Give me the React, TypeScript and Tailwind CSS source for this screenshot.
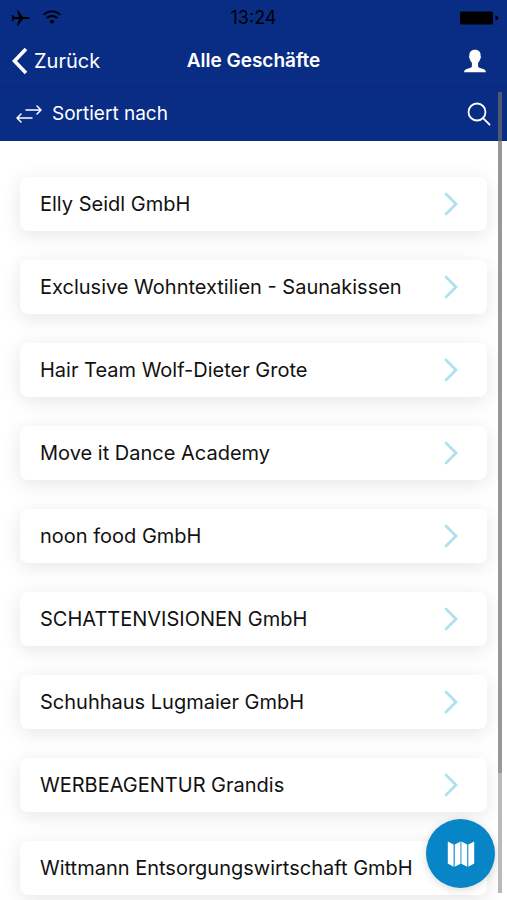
const shops = [
  'Elly Seidl GmbH',
  'Exclusive Wohntextilien - Saunakissen',
  'Hair Team Wolf-Dieter Grote',
  'Move it Dance Academy',
  'noon food GmbH',
  'SCHATTENVISIONEN GmbH',
  'Schuhhaus Lugmaier GmbH',
  'WERBEAGENTUR Grandis',
  'Wittmann Entsorgungswirtschaft GmbH',
];

function StatusBar() {
  return (
    <div className="grid h-9 grid-cols-3 items-center px-2 text-black">
      <div className="flex items-center gap-3 pl-0.5">
        <svg className="h-4 w-5" viewBox="0 0 20 16" fill="currentColor" aria-hidden="true">
          <path d="M19.5 8c0 .7-1 1.100-2.200 1.100h-4.300L8.200 15.500H6.900L9 9.100H4.600L2.900 11H1.600L2.400 8l-.8-3h1.300l1.700 1.900H9L6.900.5h1.300l4.800 6.400h4.300c1.200 0 2.200.4 2.200 1.100z" />
        </svg>
        <svg className="h-4 w-5" viewBox="0 0 20 16" fill="none" stroke="currentColor" strokeWidth="1.8" aria-hidden="true">
          <path d="M1.8 4.800a11.500 11.500 0 0 1 16.400 0M4.800 8.200a7.300 7.300 0 0 1 10.400 0" />
          <path d="M10 14 7.300 11.300a3.800 3.800 0 0 1 5.400 0z" fill="currentColor" stroke="none" />
        </svg>
      </div>
      <span className="text-center text-lg">13:24</span>
      <svg className="h-4 w-10 justify-self-end" viewBox="0 0 40 16" fill="currentColor" aria-hidden="true">
        <rect x="1" y="1.500" width="33" height="13" rx="1.500" />
        <path d="M36.500 5.500c2 .6 2.800 1.500 2.800 2.500s-.8 1.900-2.800 2.500z" />
      </svg>
    </div>
  );
}

function Header() {
  return (
    <header className="bg-[#092d84] text-white">
      <StatusBar />
      <div className="grid h-[51px] grid-cols-[1fr_auto_1fr] items-center border-b border-[#08276f] px-3">
        <button className="flex items-center gap-1.5 text-xl">
          <svg className="h-7 w-4" viewBox="0 0 16 28" fill="none" stroke="currentColor" strokeWidth="3.600" aria-hidden="true">
            <path d="M14 2 2.500 14 14 26" />
          </svg>
          Zurück
        </button>
        <h1 className="text-[19px] font-semibold">Alle Geschäfte</h1>
        <button className="mr-2 justify-self-end" aria-label="Profil">
          <svg className="h-6 w-6" viewBox="0 0 24 24" fill="currentColor" aria-hidden="true">
            <path d="M12 .8c3.900 0 5.900 2.400 5.600 6.200 .5.300.5 1.900-.3 2.700-.4 1.800-1.200 3-2.200 4v3.300c0 1.500 1.200 1.900 3.400 2.500 2.800.7 4.300 1.500 4.500 3.700H1c.2-2.200 1.700-3 4.500-3.700 2.200-.6 3.400-1 3.400-2.500v-3.300c-1-1-1.800-2.200-2.200-4-.8-.8-.8-2.400-.3-2.700C6.100 3.200 8.100.8 12 .8z" />
          </svg>
        </button>
      </div>
      <div className="flex h-[54px] items-center justify-between px-4">
        <button className="flex items-center gap-2.5 text-[19px]">
          <svg className="h-5 w-[26px]" viewBox="0 0 26 20" fill="none" stroke="currentColor" strokeWidth="1.500" strokeLinecap="round" strokeLinejoin="round" aria-hidden="true">
            <path d="M10 6h15M21 2l4 4-4 4M16 14H1M5 10l-4 4 4 4" />
          </svg>
          Sortiert nach
        </button>
        <button aria-label="Suchen">
          <svg className="h-6 w-6" viewBox="0 0 24 24" fill="none" stroke="currentColor" strokeWidth="1.800" strokeLinecap="round" aria-hidden="true">
            <circle cx="10" cy="10" r="8.500" />
            <path d="m16.300 16.300 6.200 6.200" />
          </svg>
        </button>
      </div>
    </header>
  );
}

export default function App() {
  return (
    <div className="relative h-screen overflow-hidden bg-white font-[Inter,'Liberation_Sans',sans-serif]">
      <Header />
      <main className="px-5 pt-9">
        <ul className="flex flex-col gap-[29px]">
          {shops.map((shop) => (
            <li key={shop}>
              <a
                href="#"
                className="flex h-[54px] items-center justify-between rounded-lg bg-white pr-7 pl-5 text-xl text-[#111111] shadow-[0_4px_20px_rgba(0,0,0,0.1)]"
              >
                <span className="whitespace-nowrap">{shop}</span>
                <svg className="h-6 w-4 shrink-0" viewBox="0 0 16 24" fill="none" stroke="#b0dfee" strokeWidth="2.800" strokeLinecap="round" aria-hidden="true">
                  <path d="m3 2 10 10L3 22" />
                </svg>
              </a>
            </li>
          ))}
        </ul>
      </main>

      {/* Map button */}
      <button
        className="absolute right-3 bottom-3 flex h-[69px] w-[69px] items-center justify-center rounded-full bg-[#0885c7] text-white shadow-[0_2px_8px_rgba(0,0,0,0.15)]"
        aria-label="Karte"
      >
        <svg className="h-7 w-7" viewBox="0 0 28 28" fill="currentColor" aria-hidden="true">
          <path d="M.8 1.500 6.600 4.500v22.300L.8 23.500zM7.700 4.500l5.800-3v22.300l-5.800 3zM14.400 1.500l5.800 3v22.300l-5.800-3zM21.300 4.500l5.900-3v22l-5.900 3.300z" />
        </svg>
      </button>

      {/* Scroll indicators */}
      <div className="absolute top-[92px] right-[5px] bottom-[7px] flex w-1 flex-col">
        <div className="h-[85%] bg-[#6b6b6b]/70" />
        <div className="flex-1 bg-[#b9b9b9]" />
      </div>
    </div>
  );
}
